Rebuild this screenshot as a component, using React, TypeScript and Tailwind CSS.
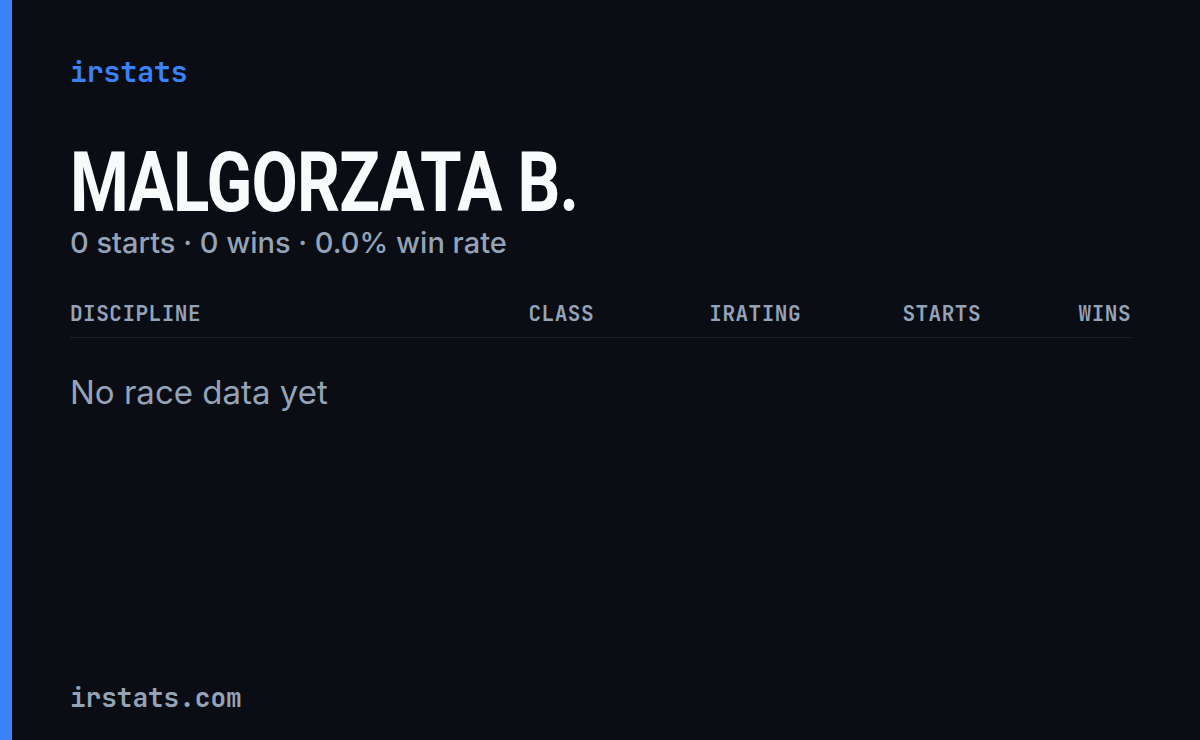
const mono = 'font-["JetBrains_Mono","DejaVu_Sans_Mono","Liberation_Mono",monospace]';

const columns = [
  { label: 'Discipline', align: 'text-left' },
  { label: 'Class', align: 'text-right' },
  { label: 'iRating', align: 'text-right' },
  { label: 'Starts', align: 'text-right' },
  { label: 'Wins', align: 'text-right' },
];

export default function App() {
  return (
    <div className="flex h-[740px] w-[1200px] overflow-hidden bg-[#0a0d14]">
      <div className="w-3 shrink-0 bg-[#3b82f6]" />
      <div className="flex flex-1 flex-col pl-[58px] pr-[69px] pt-[54px] pb-[26px]">
        <p className={`${mono} text-[28px] font-semibold leading-9 text-[#3b82f6]`}>irstats</p>

        {/* condensed display face isn't installed, so squeeze Roboto */}
        <h1 className='mt-[55px] origin-left scale-x-[0.8] whitespace-nowrap font-["Roboto",sans-serif] text-[84px] font-bold leading-[76px] tracking-[-1px] text-[#f8fafc]'>
          MALGORZATA B.
        </h1>
        <p className='mt-[6px] font-["Inter",sans-serif] text-[29px] font-medium leading-8 text-[#94a3b8]'>
          0 starts · 0 wins · 0.0% win rate
        </p>

        <div
          className={`mt-[41px] grid grid-cols-[1fr_120px_207px_180px_150px] border-b border-[#1c212c] pb-[9px] ${mono} text-[21px] font-semibold uppercase leading-7 tracking-[0.5px] text-[#94a3b8]`}
        >
          {columns.map((c) => (
            <span key={c.label} className={c.align}>
              {c.label}
            </span>
          ))}
        </div>

        <p className='mt-[34px] font-["Inter",sans-serif] text-[33px] leading-10 text-[#94a3b8]'>
          No race data yet
        </p>

        <p className={`mt-auto ${mono} text-[26px] font-semibold leading-8 text-[#94a3b8]`}>irstats.com</p>
      </div>
    </div>
  );
}
